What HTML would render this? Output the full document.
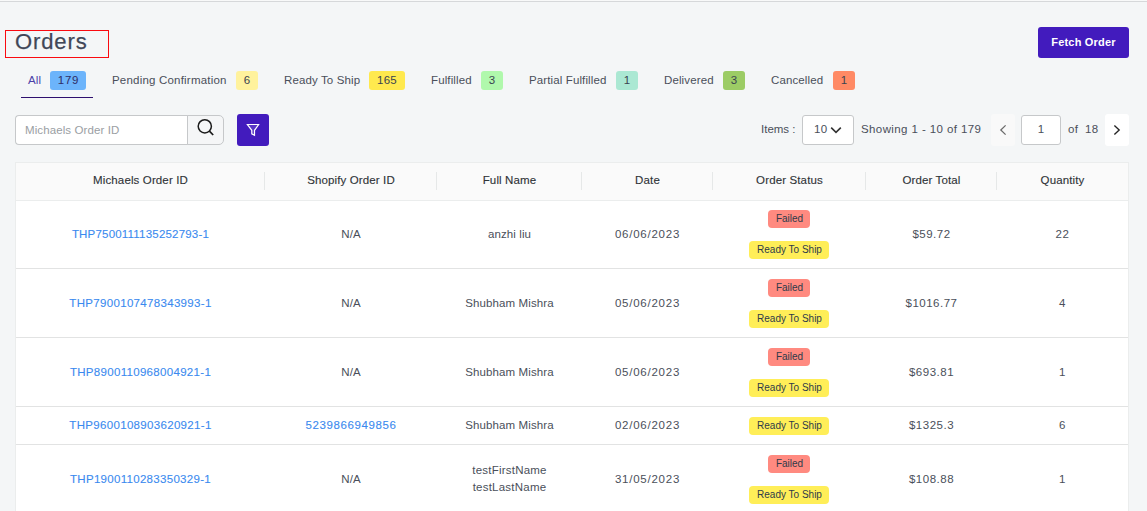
<!DOCTYPE html>
<html><head><meta charset="utf-8"><title>Orders</title>
<style>
*{box-sizing:border-box;margin:0;padding:0}
html,body{width:1147px;height:511px;overflow:hidden}
body{background:#f4f6f7;font-family:"Liberation Sans",sans-serif;font-size:11.5px;color:#4a4f5a;position:relative}
.abs{position:absolute}
.top0{left:0;top:0;width:1147px;height:1px;background:#f8f9f9}
.topline{left:0;top:1px;width:1147px;height:1px;background:#d6d8da}
.redbox{left:5px;top:30px;width:104px;height:28px;border:1px solid #fa0a10}
.title{left:15px;top:26px;font-size:22px;line-height:32px;color:#414758;letter-spacing:.9px;-webkit-text-stroke:.25px #414758;white-space:nowrap}
.fetch{left:1038px;top:27px;width:91px;height:31px;background:#421bbd;border-radius:3px;color:#fff;font-weight:bold;font-size:11px;line-height:30px;text-align:center;letter-spacing:.2px}
.tab{top:71px;height:19px;line-height:18px;font-size:11.5px;color:#4a4f5a;white-space:nowrap;letter-spacing:.12px}
.bdg{top:71px;height:19px;line-height:18px;border-radius:3px;text-align:center;font-size:11.5px;color:#3a4350;letter-spacing:.3px}
.uline{left:21px;top:97px;width:72px;height:1px;background:#2e0f6e}
.sin{left:15px;top:115px;width:173px;height:30px;background:#fff;border:1px solid #c6c8ca;border-right:none;border-radius:4px 0 0 4px;color:#9a9ea3;font-size:11.5px;line-height:28px;padding-left:9px;letter-spacing:.1px}
.sbtn{left:187px;top:115px;width:37px;height:30px;background:#f5f6f7;border:1px solid #c6c8ca;border-radius:0 5px 5px 0}
.fbtn{left:237px;top:114px;width:32px;height:32px;background:#421bbd;border-radius:3px}
.txt{top:120px;height:18px;line-height:18px;font-size:11.5px;white-space:nowrap;color:#4a4f5a;letter-spacing:.25px}
.sel{left:802px;top:115px;width:52px;height:30px;background:#fff;border:1px solid #c6c8ca;border-radius:3px}
.pbtn{top:114px;width:24px;height:32px;border-radius:3px}
.pin{left:1021px;top:115px;width:40px;height:30px;background:#fff;border:1px solid #c6c8ca;border-radius:3px;text-align:center;line-height:26px;font-size:11.5px;color:#4a4f5a}
table{position:absolute;left:15px;top:162px;width:1114px;border-collapse:separate;border-spacing:0;table-layout:fixed;border-left:1px solid #ebeded;border-right:1px solid #ebeded;border-top:1px solid #ebeded;background:#fff}
th{height:38px;padding-bottom:3px;background:#fafafa;border-bottom:1px solid #ebeded;font-weight:normal;font-size:11.5px;color:#2f3337;text-align:center;position:relative;letter-spacing:.13px;-webkit-text-stroke:.12px #2f3337}
th i{position:absolute;right:0;top:9px;width:1px;height:18px;background:#e6e8e8}
td{height:69px;border-bottom:1px solid #e2e3e3;text-align:center;vertical-align:middle;font-size:11.5px;color:#4a4f5a;letter-spacing:.1px;line-height:17px}
tr.s td{height:38px}
tr.f td{height:68px;padding-bottom:1px}
td.st{vertical-align:top;padding-top:10px}
tr.f td.st{padding-top:9px}
td.n{letter-spacing:.5px}
td.d{letter-spacing:.75px}
a{color:#3a8aef;text-decoration:none;letter-spacing:.2px;-webkit-text-stroke:.1px #3a8aef}
.b{display:block;position:relative;left:-1px;padding-left:2px;height:18px;line-height:18px;border-radius:4px;font-size:10px;color:#2e3a4a;margin:0 auto;letter-spacing:0}
.bf{width:42px;background:#ff8a80;margin-bottom:13px}
.br{width:80px;background:#ffee58}
</style></head><body>
<div class="abs top0"></div>
<div class="abs topline"></div>
<div class="abs redbox"></div>
<div class="abs title">Orders</div>
<div class="abs fetch">Fetch Order</div>

<div class="abs tab" style="left:28px;color:#4b3fa8">All</div>
<div class="abs bdg" style="left:50px;width:36px;background:#6cb4fb;color:#2f2d66;letter-spacing:.7px;padding-left:1px">179</div>
<div class="abs uline"></div>
<div class="abs tab" style="left:112px;letter-spacing:.2px">Pending Confirmation</div>
<div class="abs bdg" style="left:236px;width:22px;background:#fff29d">6</div>
<div class="abs tab" style="left:284px">Ready To Ship</div>
<div class="abs bdg" style="left:369px;width:36px;background:#ffe94e">165</div>
<div class="abs tab" style="left:431px">Fulfilled</div>
<div class="abs bdg" style="left:481px;width:22px;background:#b0f8ac">3</div>
<div class="abs tab" style="left:529px">Partial Fulfilled</div>
<div class="abs bdg" style="left:616px;width:22px;background:#abe8d3">1</div>
<div class="abs tab" style="left:664px">Delivered</div>
<div class="abs bdg" style="left:723px;width:22px;background:#9ccc65">3</div>
<div class="abs tab" style="left:771px">Cancelled</div>
<div class="abs bdg" style="left:833px;width:22px;background:#ff8a65">1</div>

<div class="abs sin">Michaels Order ID</div>
<div class="abs sbtn"><svg width="35" height="28" viewBox="0 0 35 28" style="display:block"><circle cx="16.8" cy="10.3" r="6.6" fill="none" stroke="#1c1c1c" stroke-width="1.5"/><path d="M21.4 15.2 L25.2 19" stroke="#1c1c1c" stroke-width="1.7" stroke-linecap="butt" fill="none"/></svg></div>
<div class="abs fbtn"><svg width="32" height="32" viewBox="0 0 32 32" style="display:block"><path d="M10.4 10.5 H21.6 L17.5 16.3 V21.2 L14.8 19.8 V16.3 Z" fill="rgba(255,255,255,.12)" stroke="#fff" stroke-width="1.2" stroke-linejoin="miter"/></svg></div>

<div class="abs txt" style="left:761px;letter-spacing:0">Items :</div>
<div class="abs sel"><span class="abs" style="left:11px;top:0;line-height:26px;font-size:11.5px;color:#4a4f5a;letter-spacing:.3px">10</span><svg class="abs" style="left:26.3px;top:8.6px" width="14" height="10" viewBox="0 0 14 10"><path d="M2.2 2.6 L7 7.4 L11.8 2.6" fill="none" stroke="#333" stroke-width="1.6"/></svg></div>
<div class="abs txt" style="left:861px;letter-spacing:.4px">Showing 1 - 10 of 179</div>
<div class="abs pbtn" style="left:991px;background:#f9f9f9"><svg width="24" height="32" viewBox="0 0 24 32" style="display:block"><path d="M14.6 11.4 L9.8 16 L14.6 20.6" fill="none" stroke="#6a6a6a" stroke-width="1.25"/></svg></div>
<div class="abs pin">1</div>
<div class="abs txt" style="left:1068px">of &nbsp;18</div>
<div class="abs pbtn" style="left:1105px;background:#fff"><svg width="24" height="32" viewBox="0 0 24 32" style="display:block"><path d="M9.4 11.4 L14.2 16 L9.4 20.6" fill="none" stroke="#222" stroke-width="1.35"/></svg></div>

<table>
<colgroup><col style="width:249px"><col style="width:172px"><col style="width:145px"><col style="width:131px"><col style="width:153px"><col style="width:131px"><col style="width:131px"></colgroup>
<tr><th>Michaels Order ID<i></i></th><th>Shopify Order ID<i></i></th><th>Full Name<i></i></th><th>Date<i></i></th><th>Order Status<i></i></th><th>Order Total<i></i></th><th>Quantity</th></tr>
<tr class="f"><td><a>THP7500111135252793-1</a></td><td>N/A</td><td>anzhi liu</td><td class="d">06/06/2023</td><td class="st"><span class="b bf">Failed</span><span class="b br">Ready To Ship</span></td><td class="n">$59.72</td><td class="n">22</td></tr>
<tr><td><a style="letter-spacing:.32px">THP7900107478343993-1</a></td><td>N/A</td><td>Shubham Mishra</td><td class="d">05/06/2023</td><td class="st"><span class="b bf">Failed</span><span class="b br">Ready To Ship</span></td><td class="n">$1016.77</td><td class="n">4</td></tr>
<tr><td><a style="letter-spacing:.31px">THP8900110968004921-1</a></td><td>N/A</td><td>Shubham Mishra</td><td class="d">05/06/2023</td><td class="st"><span class="b bf">Failed</span><span class="b br">Ready To Ship</span></td><td class="n">$693.81</td><td class="n">1</td></tr>
<tr class="s"><td><a style="letter-spacing:.32px">THP9600108903620921-1</a></td><td><a style="letter-spacing:.62px">5239866949856</a></td><td>Shubham Mishra</td><td class="d">02/06/2023</td><td class="st"><span class="b br">Ready To Ship</span></td><td class="n">$1325.3</td><td class="n">6</td></tr>
<tr><td><a style="letter-spacing:.3px">THP1900110283350329-1</a></td><td>N/A</td><td style="letter-spacing:.22px">testFirstName<br>testLastName</td><td class="d">31/05/2023</td><td class="st"><span class="b bf">Failed</span><span class="b br">Ready To Ship</span></td><td class="n">$108.88</td><td class="n">1</td></tr>
</table>
</body></html>
